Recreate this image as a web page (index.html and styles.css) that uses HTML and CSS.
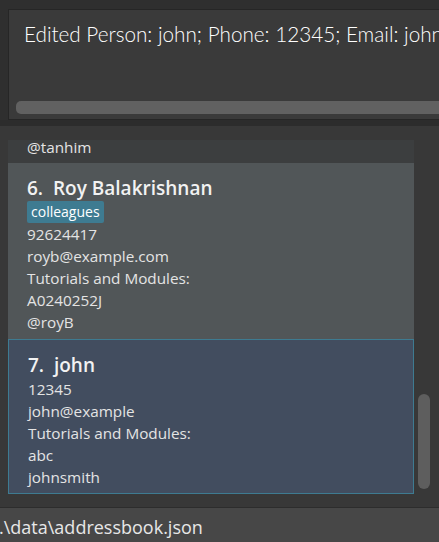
FILE: index.html
```html
<!DOCTYPE html>
<html>
<head>
<meta charset="utf-8">
<link rel="stylesheet" href="styles.css">
</head>
<body>
<div class="app">
  <div class="result-wrap">
    <div class="result-box">
      <div class="result-text">Edited Person: john; Phone: 12345; Email: john@example; Tutorials and Modules: abc</div>
      <div class="hscroll"><div class="hthumb"></div></div>
    </div>
  </div>
  <div class="divider"></div>
  <div class="list-panel">
    <div class="list-view">
      <div class="cards">
        <div class="card even partial">
          <div class="line">@tanhim</div>
        </div>
        <div class="card odd">
          <div class="name">6.&nbsp;&nbsp;Roy Balakrishnan</div>
          <div class="tags"><span class="tag">colleagues</span></div>
          <div class="line">92624417</div>
          <div class="line">royb@example.com</div>
          <div class="line">Tutorials and Modules:</div>
          <div class="line">A0240252J</div>
          <div class="line">@royB</div>
        </div>
        <div class="card selected">
          <div class="name">7.&nbsp;&nbsp;john</div>
          <div class="line">12345</div>
          <div class="line">john@example</div>
          <div class="line">Tutorials and Modules:</div>
          <div class="line">abc</div>
          <div class="line">johnsmith</div>
        </div>
      </div>
    </div>
    <div class="vscroll"><div class="vthumb"></div></div>
  </div>
  <div class="status"><span class="status-text">.\data\addressbook.json</span></div>
</div>
</body>
</html>
```

FILE: styles.css
```css
* {
  box-sizing: border-box;
}
html, body {
  margin: 0;
  padding: 0;
  background: #2f2f2f;
  overflow: hidden;
}
.app {
  width: 439px;
  height: 542px;
  display: flex;
  flex-direction: column;
  overflow: hidden;
  font-family: "Open Sans", "Noto Sans", sans-serif;
}
.result-wrap {
  padding: 9px 0 0 8px;
  background: #2f2f2f;
}
.result-box {
  width: 500px;
  height: 111px;
  border: 1px solid #262626;
  background: #3a3a3a;
  display: flex;
  flex-direction: column;
  justify-content: space-between;
  padding: 11px 0 5px 7px;
}
.result-text {
  font-family: "Lato", sans-serif;
  font-weight: 300;
  font-size: 20.7px;
  line-height: 26px;
  color: #ffffff;
  padding-left: 8px;
  white-space: nowrap;
}
.hscroll {
  height: 13px;
}
.hthumb {
  height: 13px;
  width: 480px;
  background: #616161;
  border-radius: 5px;
}
.divider {
  height: 6px;
  background: #2c2c2c;
}
.list-panel {
  height: 381px;
  background: #383838;
  display: flex;
  padding: 14px 0 0 8px;
}
.list-view {
  width: 406px;
  height: 354px;
  overflow: hidden;
}
.cards {
  display: flex;
  flex-direction: column;
}
.card {
  padding: 12px 5px 6px 19px;
  color: #e4e4e4;
}
.card.even { background: #3c3e3f; }
.card.odd { background: #515658; }
.card.selected {
  background: #424d5f;
  border: 1px solid #3e7b91;
  padding: 12px 5px 5px 19px;
}
.card.partial {
  margin-top: -4px;
  padding-top: 0;
  padding-bottom: 5px;
}
.name {
  font-size: 19px;
  font-weight: 600;
  line-height: 26px;
  color: #f2f2f2;
  white-space: nowrap;
}
.tags {
  display: flex;
  height: 22px;
}
.tag {
  background: #3e7b91;
  color: #ffffff;
  font-size: 14px;
  line-height: 22px;
  padding: 0 4px;
  border-radius: 2px;
}
.line {
  font-size: 15.3px;
  line-height: 22px;
  white-space: nowrap;
}
.vscroll {
  width: 25px;
  height: 354px;
  display: flex;
  flex-direction: column;
  justify-content: flex-end;
  padding-left: 4px;
}
.vthumb {
  width: 12px;
  height: 95px;
  margin-bottom: 5px;
  background: #5e5e5e;
  border-radius: 6px;
}
.status {
  flex: 1;
  background: #474747;
  border-top: 1px solid #2d2d2d;
  display: flex;
  align-items: center;
  overflow: hidden;
  padding-top: 4px;
}
.status-text {
  font-size: 18px;
  color: #e8e8e8;
  white-space: nowrap;
  margin-left: -1px;
}
```
